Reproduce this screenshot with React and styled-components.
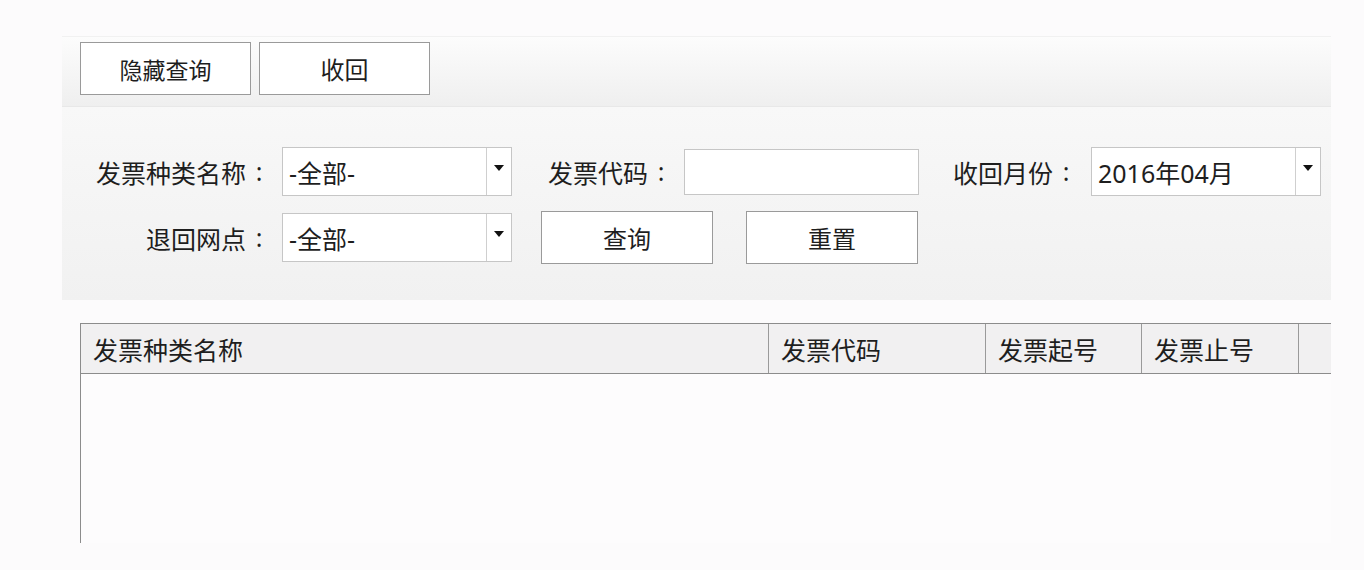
import React from 'react'
import styled, { createGlobalStyle } from 'styled-components'

const GlobalStyle = createGlobalStyle`
  body {
    margin: 0;
    background: #fcfbfc;
    font-family: "Noto Sans", "Noto Sans CJK SC", sans-serif;
    color: #1e1e1e;
  }
`

const Styled = {
    Page: styled.div`
      width: 1364px;
      height: 570px;
      padding: 36px 0 0 62px;
      box-sizing: border-box;
      overflow: hidden;
    `,
    Toolbar: styled.div`
      display: flex;
      gap: 8px;
      width: 1269px;
      height: 71px;
      box-sizing: border-box;
      padding: 5px 0 0 18px;
      border-top: 1px solid #f1f1f1;
      border-bottom: 1px solid #e8e8e8;
      background: linear-gradient(#fcfcfc, #efefef);
    `,
    Button: styled.button`
      display: flex;
      align-items: center;
      justify-content: center;
      width: ${props => props.w || 172}px;
      height: 53px;
      padding: 0;
      border: 1px solid #9a9a9a;
      background: #ffffff;
      font-family: inherit;
      font-size: ${props => props.size || 24}px;
      color: #1e1e1e;
    `,
    Query: styled.div`
      display: flex;
      flex-direction: column;
      gap: 15px;
      width: 1269px;
      height: 193px;
      box-sizing: border-box;
      padding-top: 40px;
      background: linear-gradient(#f8f8f8, #f1f1f1);
    `,
    Row: styled.div`
      display: flex;
      align-items: center;
    `,
    Label: styled.div`
      display: flex;
      justify-content: ${props => props.align === 'right' ? 'flex-end' : 'flex-start'};
      align-items: center;
      width: ${props => props.w}px;
      margin-left: ${props => props.left || 0}px;
      margin-right: 10px;
      font-size: 25px;
      white-space: nowrap;
    `,
    Colon: styled.span`
      display: inline-block;
      width: 26px;
      text-align: center;
      padding-bottom: 2px;
    `,
    Select: styled.div`
      display: flex;
      width: 230px;
      height: 49px;
      box-sizing: border-box;
      border: 1px solid #c6c6c6;
      background: #ffffff;
    `,
    SelectText: styled.div`
      flex: 1;
      display: flex;
      align-items: center;
      padding-left: 6px;
      font-size: 25px;
    `,
    ArrowCell: styled.div`
      display: flex;
      justify-content: center;
      width: 25px;
      padding-top: 17px;
      box-sizing: border-box;
      border-left: 1px solid #cfcfcf;
    `,
    Arrow: styled.div`
      width: 0;
      height: 0;
      border-left: 5px solid transparent;
      border-right: 5px solid transparent;
      border-top: 6px solid #111;
    `,
    Input: styled.input`
      width: 235px;
      height: 46px;
      box-sizing: border-box;
      border: 1px solid #c6c6c6;
      background: #ffffff;
      outline: none;
    `,
    Actions: styled.div`
      display: flex;
      gap: 33px;
      margin-left: 29px;
    `,
    Table: styled.div`
      width: 1251px;
      margin: 23px 0 0 18px;
    `,
    Head: styled.div`
      display: grid;
      grid-template-columns: 687px 217px 156px 157px 34px;
      height: 51px;
      box-sizing: border-box;
      border-top: 1px solid #8c8c8c;
      border-bottom: 1px solid #8c8c8c;
      border-left: 1px solid #8c8c8c;
      background: #f1f0f1;
    `,
    HeadCell: styled.div`
      display: flex;
      align-items: center;
      padding-left: 12px;
      font-size: 25px;
      border-left: ${props => props.first ? 'none' : '1px solid #9a9a9a'};
    `,
    Body: styled.div`
      height: 169px;
      border-left: 1px solid #8c8c8c;
      background: #fdfcfd;
    `,
}

const columns = ['发票种类名称', '发票代码', '发票起号', '发票止号', '']

const SelectBox = ({ value }) => (
    <Styled.Select>
        <Styled.SelectText>{value}</Styled.SelectText>
        <Styled.ArrowCell>
            <Styled.Arrow />
        </Styled.ArrowCell>
    </Styled.Select>
)

const Field = ({ children, ...props }) => (
    <Styled.Label {...props}>
        {children}
        <Styled.Colon>:</Styled.Colon>
    </Styled.Label>
)

const App = () => {
    return (
        <>
            <GlobalStyle />
            <Styled.Page>
                <Styled.Toolbar>
                    <Styled.Button w={171} size={23}>隐藏查询</Styled.Button>
                    <Styled.Button w={171}>收回</Styled.Button>
                </Styled.Toolbar>
                <Styled.Query>
                    <Styled.Row>
                        <Field w={210} align="right">发票种类名称</Field>
                        <SelectBox value="-全部-" />
                        <Field w={126} left={36}>发票代码</Field>
                        <Styled.Input />
                        <Field w={128} left={34}>收回月份</Field>
                        <SelectBox value="2016年04月" />
                    </Styled.Row>
                    <Styled.Row>
                        <Field w={210} align="right">退回网点</Field>
                        <SelectBox value="-全部-" />
                        <Styled.Actions>
                            <Styled.Button>查询</Styled.Button>
                            <Styled.Button>重置</Styled.Button>
                        </Styled.Actions>
                    </Styled.Row>
                </Styled.Query>
                <Styled.Table>
                    <Styled.Head>
                        {columns.map((c, i) => (
                            <Styled.HeadCell key={i} first={i === 0}>{c}</Styled.HeadCell>
                        ))}
                    </Styled.Head>
                    <Styled.Body />
                </Styled.Table>
            </Styled.Page>
        </>
    )
}

export default App
